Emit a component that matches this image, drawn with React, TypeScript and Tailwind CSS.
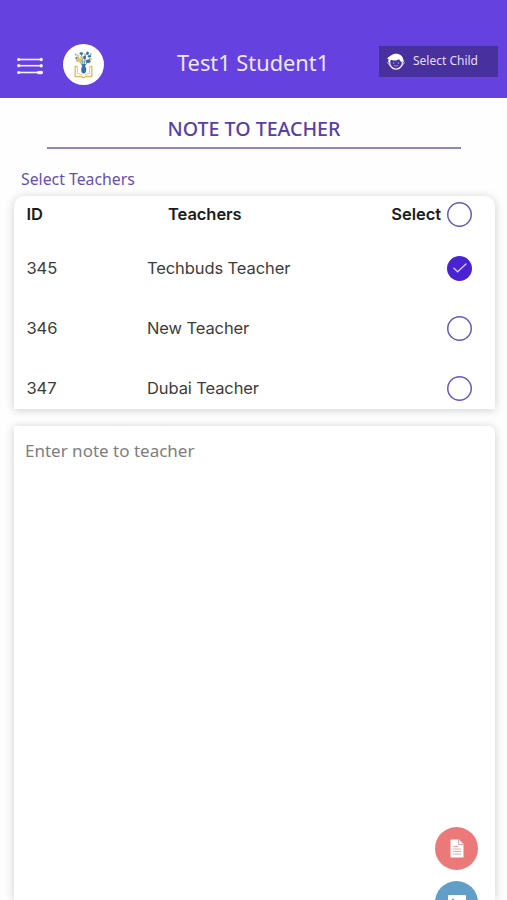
import { useState } from "react";

const TEACHERS = [
  { id: 345, name: "Techbuds Teacher" },
  { id: 346, name: "New Teacher" },
  { id: 347, name: "Dubai Teacher" },
];

const MenuIcon = () => (
  <svg width="26" height="18" viewBox="0 0 26 18" fill="#f3efff">
    {[2.5, 8.7, 15.5].map((y) => (
      <g key={y}>
        <rect x="1" y={y - 0.8} width="24" height="1.6" />
        <circle cx="1.7" cy={y} r="1.6" />
        <circle cx="24.2" cy={y} r="1.7" />
      </g>
    ))}
    <ellipse cx="22.8" cy="15.5" rx="3" ry="1.8" />
  </svg>
);

const SchoolLogo = () => (
  <svg width="41" height="41" viewBox="0 0 41 41">
    <circle cx="20.5" cy="20.5" r="20.5" fill="#fff" />
    <g fill="none" stroke="#dfbd68" strokeWidth="1.4">
      <path d="M14.5 22.5h-2.3v10h6.3l2 1.3 2-1.3h6.3v-10h-2.3" />
      <path d="M14.5 23v6.3l5 1.4M26.5 23v6.3l-5 1.4" strokeWidth="0.8" />
    </g>
    <g stroke="#5686ad" strokeWidth="0.9" fill="none">
      <path d="M20.5 24L15 13M20.5 24L18.5 10M20.5 24L23 10M20.5 24L27 14" />
    </g>
    <g fill="#356fa8">
      <ellipse cx="20.7" cy="25.8" rx="2.5" ry="3.8" />
      <ellipse cx="18.3" cy="9.5" rx="1.8" ry="1.3" />
      <ellipse cx="24.5" cy="9.2" rx="1.4" ry="1.8" />
      <ellipse cx="26.5" cy="12.2" rx="1.6" ry="1.2" />
      <ellipse cx="21.5" cy="13.5" rx="1.3" ry="1.9" />
      <ellipse cx="25" cy="17.3" rx="2.8" ry="1.7" />
      <circle cx="13.5" cy="14.2" r="1.1" />
      <path d="M19 20h3.5l-1 3h-1.6z" />
    </g>
    <g fill="#e6c36b">
      <ellipse cx="16" cy="16.2" rx="3.2" ry="2.1" />
      <circle cx="15" cy="11.7" r="1.3" />
      <circle cx="21.8" cy="10.5" r="1.1" />
      <circle cx="28" cy="15.2" r="1.1" />
      <circle cx="18" cy="13" r="0.9" />
      <circle cx="22.5" cy="17" r="1" />
    </g>
    <g fill="#7fb0c8">
      <circle cx="12.8" cy="10.5" r="1" />
      <circle cx="27.8" cy="10" r="0.9" />
      <circle cx="19.5" cy="17.5" r="1.2" />
    </g>
  </svg>
);

const ChildIcon = () => (
  <svg width="18" height="18" viewBox="0 0 18 18" fill="none">
    <path
      d="M2.7 8.5a6.4 6.4 0 1 0 12.6 0"
      stroke="#efeaff"
      strokeWidth="1.3"
    />
    <path
      d="M.3 5.500C1 4 3 3.500 4 2.600 5.800.7 9 .4 11.200 1c2.800.7 4.800 2.800 5 5.200l.8 2.300-3 .2-2-2.500C9.700 7.500 6.500 8.200 4 6.800L2.800 9.200 1.300 9 1.600 6.500z"
      fill="#fff"
    />
    <path
      d="M1.800 8.500c-1.400 0-1.400 2.600.3 2.600M16.200 8.500c1.400 0 1.400 2.600-.3 2.600"
      stroke="#efeaff"
      strokeWidth="0.9"
    />
    <circle cx="6.700" cy="10" r="0.800" fill="#b3a4e6" />
    <circle cx="11.500" cy="10" r="0.800" fill="#b3a4e6" />
    <path d="M7 12.500q2 1.200 4 0" stroke="#b3a4e6" strokeWidth="0.800" />
  </svg>
);

const CheckCircle = ({ checked, onClick }) => (
  <button
    onClick={onClick}
    className={
      checked
        ? "flex size-[25px] shrink-0 items-center justify-center rounded-full bg-[#4923d2]"
        : "size-[25px] shrink-0 rounded-full bg-white shadow-[inset_0_0_0_1.5px_#6a57bd]"
    }
  >
    {checked && (
      <svg width="14" height="10" viewBox="0 0 14 10" fill="none">
        <path
          d="M1 5.3L4.6 8.7 13 1"
          stroke="#cfc3fa"
          strokeWidth="1.5"
          strokeLinecap="round"
        />
      </svg>
    )}
  </button>
);

const Header = () => (
  <div className="flex h-[98px] shrink-0 items-start bg-[#6542df] font-['Noto_Sans',sans-serif]">
    <div className="mt-[57px] ml-[17px]">
      <MenuIcon />
    </div>
    <div className="mt-[43.5px] ml-5">
      <SchoolLogo />
    </div>
    <p className="mt-12 ml-[73px] text-[21.8px] leading-[30px] whitespace-nowrap text-[#eee8ff]">
      Test1 Student1
    </p>
    <button className="mt-[46px] mr-[9px] ml-auto flex h-[31px] w-[119px] items-center gap-2 bg-[#49309f] pl-2">
      <ChildIcon />
      <span className="-mt-0.5 text-xs whitespace-nowrap text-[#e4dcfb]">
        Select Child
      </span>
    </button>
  </div>
);

const App = () => {
  const [selected, setSelected] = useState([345]);
  const [note, setNote] = useState("");

  const toggleTeacher = (id) => {
    setSelected((prev) =>
      prev.includes(id) ? prev.filter((i) => i !== id) : [...prev, id],
    );
  };

  const isAllSelected = selected.length === TEACHERS.length;

  return (
    <div className="relative flex h-screen flex-col overflow-hidden bg-[#fefefe]">
      <Header />

      <div className="mr-[46px] ml-[47px] mt-4 h-[35px] shrink-0 border-b-2 border-[#9183c3] text-center font-['Noto_Sans',sans-serif]">
        <p className="text-[19.6px] leading-[30px] font-medium text-[#5640a8]">
          NOTE TO TEACHER
        </p>
      </div>
      <p className="mt-[18px] ml-[21px] font-['Noto_Sans',sans-serif] text-[15.8px] leading-6 text-[#6450b0]">
        Select Teachers
      </p>

      {/* Teachers list */}
      <div className="mt-[5px] mr-3 ml-3.5 h-[213px] shrink-0 rounded-t-[10px] bg-white font-['Inter',sans-serif] shadow-[0_1px_10px_rgba(0,0,0,0.2)]">
        <div className="flex h-[37px] items-center pr-[23px] pl-[12.5px] text-[16.5px] font-semibold tracking-[-0.06px] text-[#1c1c1c]">
          <p className="w-[141.5px]">ID</p>
          <p>Teachers</p>
          <p className="mr-1.5 ml-auto">Select</p>
          <CheckCircle
            checked={isAllSelected}
            onClick={() =>
              setSelected(isAllSelected ? [] : TEACHERS.map((i) => i.id))
            }
          />
        </div>
        <div className="mt-1.5">
          {TEACHERS.map((teacher) => (
            <div
              key={teacher.id}
              className="flex h-[60px] items-center pr-[23px] pb-0.5 pl-[12.5px] text-[16.5px] tracking-[-0.1px] text-[#3c3c3c]"
            >
              <p className="w-[120.5px]">{teacher.id}</p>
              <p className="flex-1">{teacher.name}</p>
              <CheckCircle
                checked={selected.includes(teacher.id)}
                onClick={() => toggleTeacher(teacher.id)}
              />
            </div>
          ))}
        </div>
      </div>

      <div className="mt-[17px] mr-3 ml-3.5 flex flex-1 rounded-tr-md bg-white shadow-[0_1px_10px_rgba(0,0,0,0.2)]">
        <textarea
          value={note}
          onChange={(e) => setNote(e.target.value)}
          placeholder="Enter note to teacher"
          className="w-full resize-none px-[11px] pt-[11.5px] font-['Noto_Sans',sans-serif] text-[17px] leading-[26px] outline-none placeholder:text-[#7d7d7d]"
        />
      </div>

      {/* Attachment buttons */}
      <div className="absolute top-[827px] right-[29px] flex flex-col gap-[11px]">
        <button className="flex size-[43px] items-center justify-center rounded-full bg-[#ec7979]">
          <svg width="14" height="19" viewBox="0 0 14 19">
            <path d="M.5.5h8.5l4.5 4.5v13.5H.5z" fill="#fff" />
            <path
              d="M8.5.5V5.5h5M3 7.5h5M3 10h8M3 12.5h8M3 15h8"
              stroke="#f0a3a3"
              fill="none"
            />
          </svg>
        </button>
        <button className="flex size-[43px] items-start justify-center rounded-full bg-[#629fc8] pt-[14px]">
          <svg width="18" height="15" viewBox="0 0 18 15">
            <rect width="18" height="15" rx="1" fill="#fff" />
            <circle cx="5" cy="4.8" r="1.2" fill="#629fc8" />
            <path d="M2 13l4-5 3 3 3-4 4 6z" fill="#629fc8" />
          </svg>
        </button>
      </div>
    </div>
  );
};

export default App;
